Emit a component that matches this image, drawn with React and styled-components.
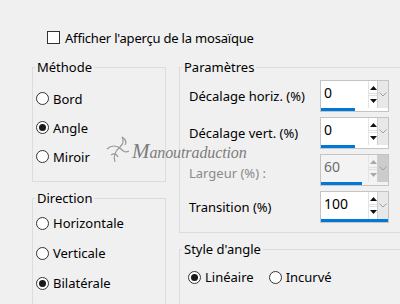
import React from 'react';
import styled, { createGlobalStyle } from 'styled-components';

const GlobalStyle = createGlobalStyle`
    body {
        margin: 0;
        background: #f0f0f0;
    }
`;

const Page = styled.div`
    position: relative;
    width: 400px;
    height: 304px;
    overflow: hidden;
    box-sizing: border-box;
    padding: 31px 0 0 32px;
    background: #f0f0f0;
    font-family: 'Noto Sans', 'Open Sans', sans-serif;
    font-size: 13px;
    color: #000;
    display: flex;
    flex-direction: column;
`;

const CheckRow = styled.label`
    display: flex;
    align-items: center;
    gap: 5px;
    height: 13px;
    margin-left: 15px;
    white-space: nowrap;
    letter-spacing: -0.2px;
`;

const CheckBox = styled.span`
    width: 13px;
    height: 13px;
    box-sizing: border-box;
    border: 1px solid #333;
    background: #fff;
    flex: none;
`;

const Columns = styled.div`
    display: flex;
    gap: 13px;
    margin-top: 15px;
    width: 420px;
`;

const Column = styled.div`
    display: flex;
    flex-direction: column;
    gap: 8px;
    width: ${(p) => p.$width}px;
    flex: none;
`;

const Group = styled.fieldset`
    margin: 0;
    padding: 0;
    border: 1px solid #dcdcdc;
    min-width: 0;
`;

const Legend = styled.legend`
    margin-left: 2px;
    padding: 0 2px;
    line-height: 17px;
    white-space: nowrap;
`;

const GroupBody = styled.div`
    display: flex;
    flex-direction: ${(p) => (p.$row ? 'row' : 'column')};
    gap: ${(p) => p.$gap || 0}px;
    padding: ${(p) => p.$pad};
`;

const RadioRow = styled.label`
    display: flex;
    align-items: center;
    gap: 4px;
    height: ${(p) => p.$h || 20}px;
    white-space: nowrap;
`;

const RadioCircle = styled.span`
    width: 13px;
    height: 13px;
    box-sizing: border-box;
    border: 1px solid #333;
    border-radius: 50%;
    background: #fff;
    display: flex;
    align-items: center;
    justify-content: center;
    flex: none;
    &::after {
        content: '';
        width: 7px;
        height: 7px;
        border-radius: 50%;
        background: ${(p) => (p.$checked ? '#1a1a1a' : 'transparent')};
    }
`;

const ParamRow = styled.div`
    display: grid;
    grid-template-columns: 131px 69px;
    align-items: center;
    height: 32px;
`;

const ParamLabel = styled.span`
    color: ${(p) => (p.$disabled ? '#8a8a8a' : '#000')};
    white-space: nowrap;
    margin-top: ${(p) => (p.$disabled ? 5 : 0)}px;
`;

const SpinBox = styled.div`
    width: 69px;
    height: 32px;
    box-sizing: border-box;
    border: 1px solid #c4c4c4;
    background: ${(p) => (p.$disabled ? '#f3f3f3' : '#fff')};
    display: flex;
    flex-direction: column;
`;

const SpinTop = styled.div`
    flex: 1;
    display: flex;
`;

const SpinValue = styled.span`
    flex: 1;
    padding: 3px 0 0 3px;
    font-size: 14px;
    line-height: 17px;
    color: ${(p) => (p.$disabled ? '#6d6d6d' : '#000')};
`;

const Arrows = styled.div`
    width: 8px;
    display: flex;
    flex-direction: column;
    justify-content: space-between;
    padding: 2px 0;
    border-left: 1px solid #e4e4e4;
`;

const ArrowBtn = styled.span`
    height: 10px;
    display: flex;
    align-items: center;
    justify-content: center;
    border-top: ${(p) => (p.$down ? '1px solid #e0e0e0' : 'none')};
    border-bottom: ${(p) => (p.$down ? 'none' : '1px solid #e0e0e0')};
`;

const Drop = styled.div`
    width: 10px;
    background: ${(p) => (p.$disabled ? '#cccccc' : '#e8e8e8')};
    border-left: 1px solid #cfcfcf;
    display: flex;
    align-items: center;
    justify-content: center;
`;

const Bar = styled.div`
    height: 3px;
    background: #0078d7;
`;

const Watermark = styled.div`
    position: absolute;
    left: 103px;
    top: 135px;
    display: flex;
    align-items: center;
    pointer-events: none;
`;

const WatermarkText = styled.span`
    font-family: 'Liberation Serif', 'DejaVu Serif', serif;
    font-style: italic;
    font-size: 16px;
    line-height: 18px;
    color: #7c7c7c;
    letter-spacing: -0.1px;
    margin: 4px 0 0 -1px;
    &::first-letter {
        font-size: 21px;
    }
`;

function Triangle({ down, color }) {
    return (
        <svg width="7" height="4" viewBox="0 0 7 4">
            <path d={down ? 'M0 0 L7 0 L3.5 4 Z' : 'M0 4 L7 4 L3.5 0 Z'} fill={color} />
        </svg>
    );
}

function Spinner({ value, bar, disabled }) {
    const arrowColor = disabled ? '#a8a8a8' : '#111';
    return (
        <SpinBox $disabled={disabled}>
            <SpinTop>
                <SpinValue $disabled={disabled}>{value}</SpinValue>
                <Arrows>
                    <ArrowBtn>
                        <Triangle color={arrowColor} />
                    </ArrowBtn>
                    <ArrowBtn $down>
                        <Triangle down color={arrowColor} />
                    </ArrowBtn>
                </Arrows>
                <Drop $disabled={disabled}>
                    <svg width="8" height="5" viewBox="0 0 8 5">
                        <path d="M0.5 0.5 L4 4 L7.5 0.5" fill="none" stroke="#a0a0a0" strokeWidth="1" />
                    </svg>
                </Drop>
            </SpinTop>
            <Bar style={{ width: bar }} />
        </SpinBox>
    );
}

function Radio({ label, checked, h }) {
    return (
        <RadioRow $h={h}>
            <RadioCircle $checked={checked} />
            {label}
        </RadioRow>
    );
}

export default function App() {
    return (
        <>
            <GlobalStyle />
            <Page>
                <CheckRow>
                    <CheckBox />
                    Afficher l'aperçu de la mosaïque
                </CheckRow>
                <Columns>
                    <Column $width={134}>
                        <Group>
                            <Legend>Méthode</Legend>
                            <GroupBody $pad="8px 0 10px 3px">
                                <Radio label="Bord" h={29} />
                                <Radio label="Angle" h={29} checked />
                                <Radio label="Miroir" h={29} />
                            </GroupBody>
                        </Group>
                        <Group>
                            <Legend>Direction</Legend>
                            <GroupBody $pad="1px 0 10px 3px">
                                <Radio label="Horizontale" h={30} />
                                <Radio label="Verticale" h={30} />
                                <Radio label="Bilatérale" h={30} checked />
                            </GroupBody>
                        </Group>
                    </Column>
                    <Column $width={270}>
                        <Group>
                            <Legend>Paramètres</Legend>
                            <GroupBody $pad="4px 0 9px 9px" $gap={5}>
                                <ParamRow>
                                    <ParamLabel>Décalage horiz. (%)</ParamLabel>
                                    <Spinner value="0" bar={34} />
                                </ParamRow>
                                <ParamRow>
                                    <ParamLabel>Décalage vert. (%)</ParamLabel>
                                    <Spinner value="0" bar={34} />
                                </ParamRow>
                                <ParamRow>
                                    <ParamLabel $disabled>Largeur (%) :</ParamLabel>
                                    <Spinner value="60" bar={41} disabled />
                                </ParamRow>
                                <ParamRow>
                                    <ParamLabel>Transition (%)</ParamLabel>
                                    <Spinner value="100" bar="100%" />
                                </ParamRow>
                            </GroupBody>
                        </Group>
                        <Group>
                            <Legend>Style d'angle</Legend>
                            <GroupBody $row $gap={15} $pad="9px 0 30px 8px">
                                <Radio label="Linéaire" checked />
                                <Radio label="Incurvé" />
                            </GroupBody>
                        </Group>
                    </Column>
                </Columns>
                <Watermark>
                    <svg width="30" height="30" viewBox="0 0 30 30">
                        <g fill="none" stroke="#9a9a9a" strokeWidth="1.2">
                            <path d="M4 14 C8 10 14 10 18 14 C20 16 22 18 26 16" />
                            <path d="M12 27 C10 22 12 16 17 12 C20 9 21 5 19 2" />
                            <path d="M19 2 C22 4 24 7 22 10" />
                            <path d="M8 20 C11 18 14 19 15 22" />
                        </g>
                    </svg>
                    <WatermarkText>Manoutraduction</WatermarkText>
                </Watermark>
            </Page>
        </>
    );
}
